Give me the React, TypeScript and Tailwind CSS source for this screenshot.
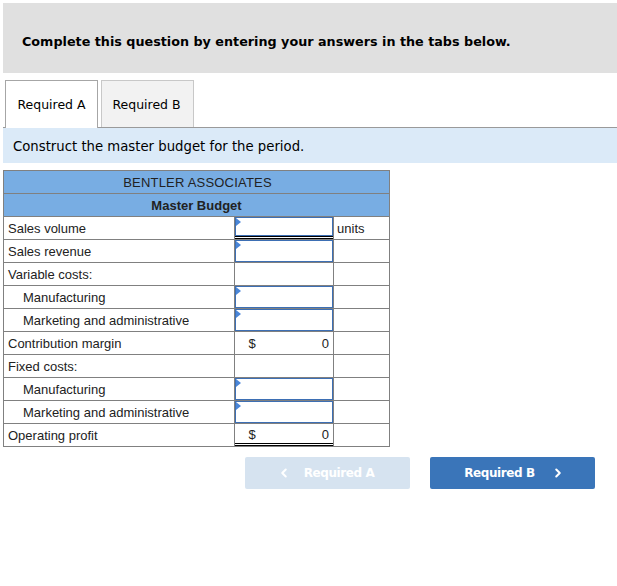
import { ChevronLeft, ChevronRight } from "lucide-react";

type Row = {
  label: string;
  indent?: boolean;
  kind: "input" | "blank" | "total";
  units?: string;
  topLine?: boolean;
  doubleLine?: boolean;
};

const rows: Row[] = [
  { label: "Sales volume", kind: "input", units: "units", doubleLine: true },
  { label: "Sales revenue", kind: "input" },
  { label: "Variable costs:", kind: "blank" },
  { label: "Manufacturing", indent: true, kind: "input" },
  { label: "Marketing and administrative", indent: true, kind: "input" },
  { label: "Contribution margin", kind: "total", topLine: true },
  { label: "Fixed costs:", kind: "blank" },
  { label: "Manufacturing", indent: true, kind: "input" },
  { label: "Marketing and administrative", indent: true, kind: "input" },
  { label: "Operating profit", kind: "total", topLine: true, doubleLine: true },
];

const verdana = "font-['DejaVu_Sans',Verdana,sans-serif]";

const AnswerInput = ({ short }: { short?: boolean }) => (
  <div className={`relative w-full border border-[#3d6fb4] bg-white ${short ? "h-[19px]" : "h-[22px]"}`}>
    <span className="absolute left-0 top-0 h-0 w-0 border-y-[4px] border-l-[5px] border-y-transparent border-l-[#4a86d8]" />
  </div>
);

export default function App() {
  return (
    <div className="min-h-[586px] w-[617px] bg-white pl-[3px] pt-[3px]">
      {/* Instructions */}
      <div className={`flex h-[70px] items-center bg-[#e0e0e0] pl-[19px] pt-[8px] ${verdana}`}>
        <p className="text-[12.75px] font-bold text-black">
          Complete this question by entering your answers in the tabs below.
        </p>
      </div>

      {/* Tabs */}
      <div className={`mt-[7px] flex gap-[3px] border-b border-[#9a9a9a] pl-[2px] ${verdana}`}>
        <div className="-mb-px flex h-[48px] w-[93px] items-center justify-center border border-b-0 border-[#a6a6a6] bg-white pt-[2px] text-[12.5px] text-black">
          Required A
        </div>
        <div className="flex h-[47px] w-[93px] items-center justify-center border border-b-0 border-[#c8c8c8] bg-[#f2f2f2] pt-[2px] pr-[2px] text-[12.5px] text-black">
          Required B
        </div>
      </div>
      <div className={`flex h-[35px] items-center bg-[#dbeaf8] pl-[10px] pt-[2px] text-[13.25px] text-black ${verdana}`}>
        Construct the master budget for the period.
      </div>

      {/* Budget table */}
      <table className="mt-[7px] w-[387px] border-collapse font-['Liberation_Sans',Arial,sans-serif] text-[13px] text-[#222]">
        <colgroup>
          <col className="w-[232px]" />
          <col className="w-[99px]" />
          <col className="w-[56px]" />
        </colgroup>
        <thead>
          <tr>
            <th colSpan={3} className="h-[23px] border border-[#808080] bg-[#78ade3] p-0 pl-[2px] pt-[1px] text-center font-normal tracking-[0.2px]">
              BENTLER ASSOCIATES
            </th>
          </tr>
          <tr>
            <th colSpan={3} className="h-[23px] border border-[#808080] bg-[#78ade3] p-0 pt-[1px] text-center font-bold">
              Master Budget
            </th>
          </tr>
        </thead>
        <tbody>
          {rows.map((r, i) => (
            <tr key={i}>
              <td className={`h-[23px] border border-[#808080] p-0 pt-[1px] ${r.indent ? "pl-[19px]" : "pl-[4px]"}`}>
                {r.label}
              </td>
              <td className={`h-[23px] border border-[#808080] p-0 align-top ${r.topLine ? "border-t-black" : ""}`}>
                {r.kind === "input" && (
                  <>
                    <AnswerInput short={r.doubleLine} />
                    {r.doubleLine && <div className="h-[3px] border-b-[3px] border-double border-black" />}
                  </>
                )}
                {r.kind === "total" && (
                  <div
                    className={`flex items-center justify-between pl-[13px] pr-[4px] ${
                      r.doubleLine ? "h-[22px] border-b-[3px] border-double border-black pt-[2px]" : "h-[22px] pt-[2px]"
                    }`}
                  >
                    <span>$</span>
                    <span>0</span>
                  </div>
                )}
              </td>
              <td className="h-[23px] border border-[#808080] p-0 pl-[3px] pt-[1px]">{r.units}</td>
            </tr>
          ))}
        </tbody>
      </table>

      {/* Navigation */}
      <div className={`mt-[10px] flex justify-end gap-[20px] pr-[22px] ${verdana}`}>
        <button className="flex h-[32px] w-[165px] items-center justify-center gap-[13px] rounded-[2px] bg-[#d6e3f0] pr-[4px] text-[12px] font-bold tracking-[-0.4px] text-white">
          <ChevronLeft size={14} strokeWidth={3.5} />
          Required A
        </button>
        <button className="flex h-[32px] w-[165px] items-center justify-center gap-[16px] rounded-[2px] bg-[#3a75b9] pl-[4px] text-[12px] font-bold tracking-[-0.4px] text-white">
          Required B
          <ChevronRight size={14} strokeWidth={3.5} />
        </button>
      </div>
    </div>
  );
}
